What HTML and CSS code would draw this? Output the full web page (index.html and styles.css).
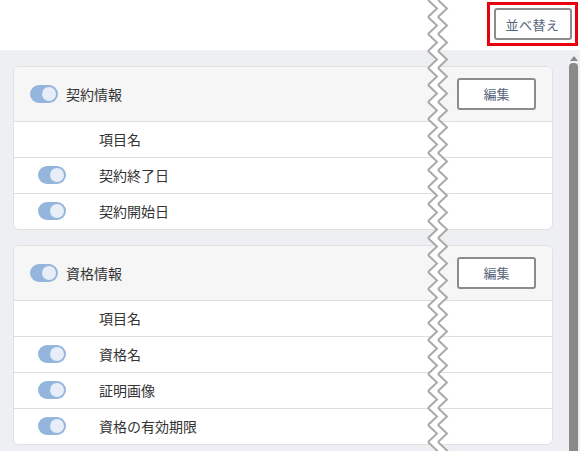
FILE: index.html
```html
<!DOCTYPE html>
<html lang="ja">
<head>
<meta charset="utf-8">
<link rel="stylesheet" href="styles.css">
</head>
<body>
<div class="topbar">
  <div class="highlight"><button class="btn sort-btn">並べ替え</button></div>
</div>
<div class="main">
  <div class="content">
    <section class="card">
      <div class="card-head">
        <span class="toggle"></span>
        <span class="title">契約情報</span>
        <button class="btn edit-btn">編集</button>
      </div>
      <div class="row"><span class="slot"></span><span class="label">項目名</span></div>
      <div class="row"><span class="slot"><span class="toggle"></span></span><span class="label">契約終了日</span></div>
      <div class="row"><span class="slot"><span class="toggle"></span></span><span class="label">契約開始日</span></div>
    </section>
    <section class="card">
      <div class="card-head">
        <span class="toggle"></span>
        <span class="title">資格情報</span>
        <button class="btn edit-btn">編集</button>
      </div>
      <div class="row"><span class="slot"></span><span class="label">項目名</span></div>
      <div class="row"><span class="slot"><span class="toggle"></span></span><span class="label">資格名</span></div>
      <div class="row"><span class="slot"><span class="toggle"></span></span><span class="label">証明画像</span></div>
      <div class="row"><span class="slot"><span class="toggle"></span></span><span class="label">資格の有効期限</span></div>
    </section>
  </div>
  <div class="scrollbar"><span class="arrow"></span><span class="thumb"></span></div>
</div>
<svg class="tear" width="22" height="451" aria-hidden="true">
  <defs>
    <pattern id="zz" width="22" height="17" patternUnits="userSpaceOnUse">
      <polygon points="1,0 10,8.5 1,17 11,17 20,8.5 11,0" fill="#fff"/>
      <polyline points="1,0 10,8.5 1,17" fill="none" stroke="#a9a9a9" stroke-width="2"/>
      <polyline points="11,0 20,8.5 11,17" fill="none" stroke="#a9a9a9" stroke-width="2"/>
    </pattern>
  </defs>
  <rect x="0" y="0" width="22" height="451" fill="url(#zz)"/>
</svg>
</body>
</html>
```
FILE: styles.css
```css
* { box-sizing: border-box; }
html, body { margin: 0; padding: 0; }
body {
  width: 580px;
  height: 451px;
  overflow: hidden;
  background: #eeeff2;
  font-family: "Noto Sans CJK JP", "Noto Sans", sans-serif;
  color: #333;
  font-size: 14px;
  position: relative;
}
.topbar {
  height: 50px;
  background: #fff;
  display: flex;
  justify-content: flex-end;
  align-items: flex-start;
  padding: 2px 2px 0 0;
}
.highlight {
  width: 91px;
  height: 44px;
  border: 3px solid #e8000f;
  display: flex;
  align-items: center;
  justify-content: center;
}
.btn {
  background: #fff;
  border: 2px solid #8c8c8c;
  border-radius: 3px;
  font-family: "Noto Sans CJK JP", sans-serif;
  color: #56657a;
  padding: 0;
}
.sort-btn {
  width: 78px;
  height: 32px;
  font-size: 13px;
  letter-spacing: 0.5px;
}
.main {
  display: flex;
  height: 401px;
}
.content {
  flex: 1;
  padding: 16px 16px 0 13px;
  display: flex;
  flex-direction: column;
  gap: 15px;
}
.card {
  background: #fff;
  border: 1px solid #e1e1e1;
  border-radius: 6px;
  overflow: hidden;
  flex-shrink: 0;
}
.card-head {
  height: 54px;
  background: #f6f6f6;
  display: flex;
  align-items: center;
  padding: 0 16px 1px 16px;
}
.card-head .title {
  margin-left: 8px;
  flex: 1;
  font-size: 14px;
}
.edit-btn {
  width: 79px;
  height: 32px;
  font-size: 13px;
}
.toggle {
  display: inline-block;
  width: 28px;
  height: 18px;
  border-radius: 9px;
  background: #95b6dc;
  position: relative;
}
.toggle::after {
  content: "";
  position: absolute;
  right: 2px;
  top: 2px;
  width: 14px;
  height: 14px;
  border-radius: 50%;
  background: #e7eef8;
}
.row {
  height: 36px;
  border-top: 1px solid #dedede;
  display: flex;
  align-items: center;
  padding-bottom: 2px;
}
.slot {
  width: 85px;
  padding-left: 24px;
  display: flex;
  align-items: center;
}
.label { font-size: 14px; }
.scrollbar {
  width: 9px;
  margin-right: 2px;
  display: flex;
  flex-direction: column;
  align-items: center;
  padding-top: 6px;
}
.arrow {
  width: 0;
  height: 0;
  border-left: 4px solid transparent;
  border-right: 4px solid transparent;
  border-bottom: 5px solid #8a8a8a;
}
.thumb {
  margin-top: 2px;
  width: 9px;
  flex: 1;
  background: #8a8a8a;
  border-radius: 4px 4px 0 0;
}
.tear {
  position: absolute;
  left: 427px;
  top: 0;
}
```
